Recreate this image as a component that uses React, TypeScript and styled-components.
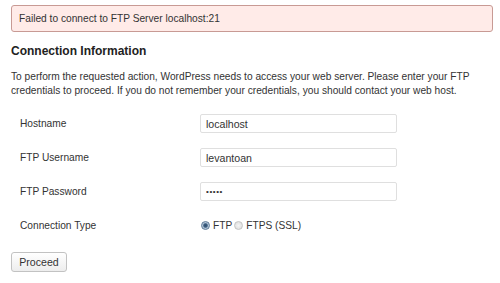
import React from 'react';
import styled, { createGlobalStyle } from 'styled-components';

const GlobalStyle = createGlobalStyle`
    html, body {
        margin : 0;
        padding : 0;
        background : #ffffff;
    }
    body {
        font-family : "Liberation Sans", Arial, sans-serif;
        color : #333333;
        font-size : 10.2px;
    }
`;

const Page = styled.div`
    width : 500px;
    height : 283px;
    padding : 5px 7px 0 11px;
    box-sizing : border-box;
    overflow : hidden;
`;

const ErrorBox = styled.div`
    height : 27px;
    box-sizing : border-box;
    display : flex;
    align-items : center;
    padding : 0 7px;
    background : #ffebe8;
    border : 1px solid #c89a94;
    border-radius : 3px;
    font-size : 10.2px;
    color : #333;
`;

const Heading = styled.h3`
    margin : 11px 0 0;
    font-size : 12px;
    line-height : 16px;
    font-weight : bold;
    color : #222;
`;

const Intro = styled.p`
    margin : 11px 0 0;
    font-size : 10.2px;
    line-height : 14px;
    color : #333;
`;

const FormTable = styled.div`
    margin-top : 16px;
    display : grid;
    grid-template-columns : 180px 1fr;
    row-gap : 15px;
    padding-left : 9px;
`;

const Label = styled.div`
    height : 19px;
    display : flex;
    align-items : center;
    font-size : 10.2px;
    color : #333;
`;

const Field = styled.div`
    height : 19px;
    display : flex;
    align-items : center;
`;

const TextInput = styled.input<{ secret?: boolean }>`
    width : 197px;
    height : 19px;
    box-sizing : border-box;
    margin : 0;
    padding : 0 5px;
    border : 1px solid #dfdfdf;
    border-radius : 2px;
    font-family : "Liberation Sans", Arial, sans-serif;
    font-size : ${(p) => (p.secret ? '8px' : '10.6px')};
    letter-spacing : ${(p) => (p.secret ? '0.6px' : '0')};
    color : #333;
    background : #fff;
    outline : none;
`;

const RadioGroup = styled.div`
    display : flex;
    align-items : center;
    padding-left : 1px;
    font-size : 10.2px;
    color : #333;
`;

const RadioOption = styled.label`
    display : flex;
    align-items : center;
    gap : 3px;
    margin-right : 2px;
`;

const RadioDot = styled.span<{ checked?: boolean }>`
    width : 9px;
    height : 9px;
    border-radius : 50%;
    box-sizing : border-box;
    border : 1px solid ${(p) => (p.checked ? '#5b7996' : '#c4c4c4')};
    background : ${(p) =>
        p.checked
            ? 'radial-gradient(circle, #2f4f70 0, #3d5f80 35%, #a9bdd1 55%, #e4ecf3 100%)'
            : 'radial-gradient(circle, #f4f4f4 0, #dadada 100%)'};
`;

const Actions = styled.div`
    margin-top : 17px;
`;

const Button = styled.button`
    width : 56px;
    height : 20px;
    margin : 0;
    padding : 0;
    border : 1px solid #c2c2c2;
    border-radius : 3px;
    background : linear-gradient(#ffffff, #ededed);
    font-family : "Liberation Sans", Arial, sans-serif;
    font-size : 10.6px;
    color : #333;
`;

const rows = [
    { label : 'Hostname', value : 'localhost' },
    { label : 'FTP Username', value : 'levantoan' },
    { label : 'FTP Password', value : '•••••', secret : true }
];

const App: React.FC = () => {
    return (
        <React.Fragment>
            <GlobalStyle />
            <Page>
                <ErrorBox>Failed to connect to FTP Server localhost:21</ErrorBox>
                <Heading>Connection Information</Heading>
                <Intro>
                    To perform the requested action, WordPress needs to access your web server. Please enter your FTP
                    credentials to proceed. If you do not remember your credentials, you should contact your web host.
                </Intro>
                <FormTable>
                    {rows.map((row) => (
                        <React.Fragment key={row.label}>
                            <Label>{row.label}</Label>
                            <Field>
                                <TextInput secret={row.secret} defaultValue={row.value} readOnly />
                            </Field>
                        </React.Fragment>
                    ))}
                    <Label>Connection Type</Label>
                    <Field>
                        <RadioGroup>
                            <RadioOption><RadioDot checked />FTP</RadioOption>
                            <RadioOption><RadioDot />FTPS (SSL)</RadioOption>
                        </RadioGroup>
                    </Field>
                </FormTable>
                <Actions>
                    <Button>Proceed</Button>
                </Actions>
            </Page>
        </React.Fragment>
    );
};

export default App;
